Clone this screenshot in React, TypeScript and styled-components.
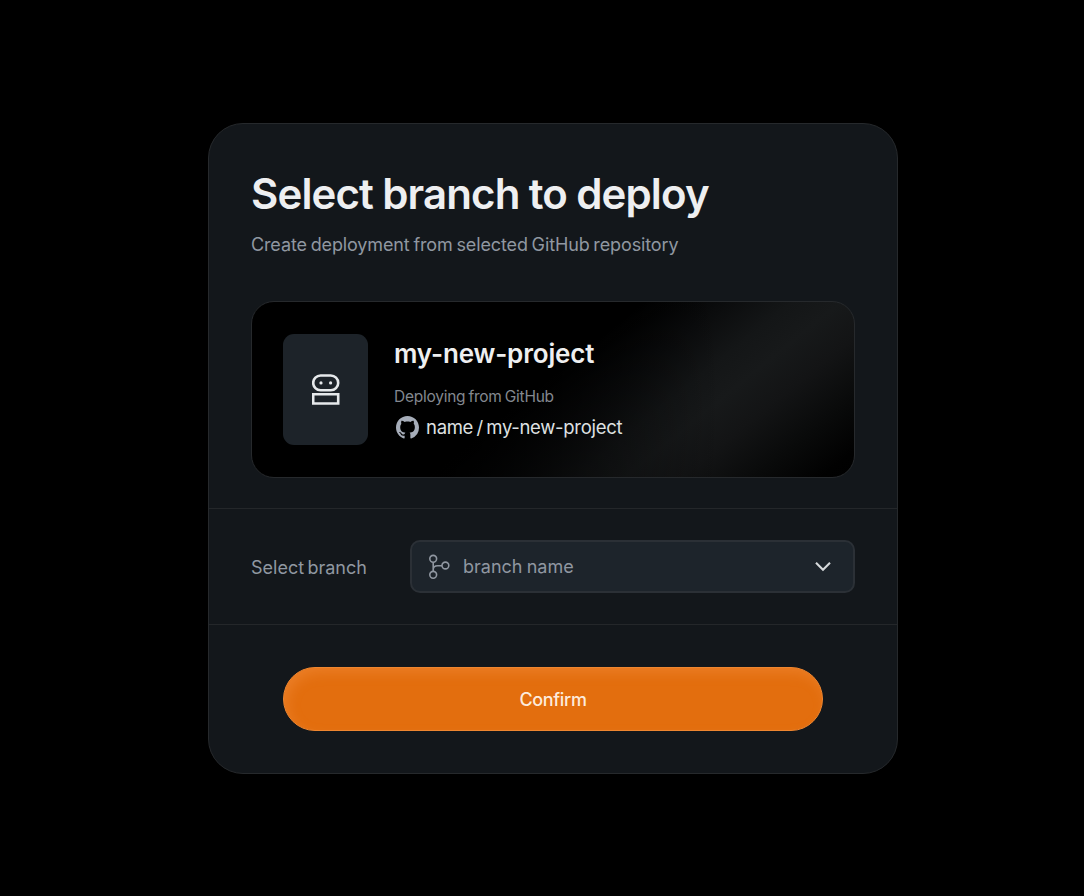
import styled, { createGlobalStyle } from "styled-components";

const GlobalStyle = createGlobalStyle`
  * { box-sizing: border-box; }
  body {
    margin: 0;
    background: #000;
    font-family: Inter, "Liberation Sans", sans-serif;
  }
`;

const Page = styled.main`
  height: 896px;
  padding: 123px 186px 0 208px;
  background: #000;
`;

const Dialog = styled.section`
  width: 690px;
  height: 651px;
  border: 1px solid #26292c;
  border-radius: 35px;
  background: #13171b;
`;

const Intro = styled.div`
  height: 384px;
  padding: 44px 42px 0;
`;

const Title = styled.h1`
  margin: 0;
  font-size: 42px;
  line-height: 52px;
  font-weight: 600;
  letter-spacing: -0.87px;
  word-spacing: -0.5px;
  color: #eeeff1;
  white-space: nowrap;
`;

const Subtitle = styled.p`
  margin: 13px 0 0;
  font-size: 18px;
  line-height: 24px;
  letter-spacing: -0.13px;
  word-spacing: -1.1px;
  color: #9097a1;
  white-space: nowrap;
`;

const ProjectCard = styled.article`
  display: flex;
  gap: 26px;
  height: 177px;
  margin-top: 44px;
  padding: 32px 31px;
  border: 1px solid #26292c;
  border-radius: 23px;
  background:
    linear-gradient(90deg, #000 25%, transparent 78%),
    linear-gradient(
      141deg,
      #000 0%,
      #000 48%,
      #0a0b0c 57%,
      #141617 66%,
      #17191a 72%,
      #131415 79%,
      #090a0a 88%,
      #010101 96%,
      #000 100%
    );
`;

const ProjectIcon = styled.div`
  display: grid;
  place-items: center;
  flex: none;
  width: 85px;
  height: 111px;
  border-radius: 11px;
  background: #1d2329;
`;

const ProjectInfo = styled.div`
  white-space: nowrap;
`;

const ProjectName = styled.h2`
  margin: 3px 0 0;
  font-size: 26px;
  line-height: 34px;
  font-weight: 600;
  letter-spacing: -0.15px;
  color: #eeeff0;
`;

const Source = styled.p`
  margin: 16px 0 0;
  font-size: 15.5px;
  line-height: 20px;
  letter-spacing: -0.25px;
  word-spacing: -1px;
  color: #83888f;
`;

const Repository = styled.div`
  display: flex;
  align-items: center;
  gap: 7px;
  height: 24px;
  margin-top: 8px;
  padding-left: 2px;
  font-size: 18.5px;
  letter-spacing: -0.3px;
  word-spacing: -1.5px;
  color: #dfe1e2;
`;

const BranchRow = styled.div`
  display: flex;
  align-items: center;
  justify-content: space-between;
  height: 117px;
  padding: 0 42px;
  border-top: 1px solid #24272a;
  border-bottom: 1px solid #24272a;
`;

const Label = styled.span`
  padding-top: 2px;
  font-size: 18px;
  word-spacing: -1.7px;
  color: #9097a1;
`;

const Select = styled.button`
  display: flex;
  align-items: center;
  width: 445px;
  height: 53px;
  padding: 0 21px 0 16px;
  border: 2px solid #2b3036;
  border-radius: 10px;
  background: #1d242b;
  color: #9097a1;
  font: inherit;
  font-size: 18px;
`;

const SelectText = styled.span`
  flex: 1;
  margin-left: 11px;
  text-align: left;
  word-spacing: -0.8px;
`;

const Actions = styled.div`
  padding: 42px 74px 0;
`;

const Confirm = styled.button`
  width: 540px;
  height: 64px;
  border: 1px solid #ee8630;
  border-radius: 32px;
  background: #e36e0e;
  box-shadow: inset 4px 6px 14px -2px rgba(255, 165, 100, 0.3);
  color: #fdebdc;
  font: inherit;
  font-size: 18px;
  font-weight: 500;
  letter-spacing: -0.35px;
`;

const RobotIcon = () => (
  <svg width="28" height="32" viewBox="0 0 28 32" fill="none" stroke="#e6e9eb" strokeWidth="2.6">
    <rect x="1.2" y="1.5" width="25" height="14.8" rx="7.4" />
    <path d="M1.2 20.3H26.2V29.5H1.2Z" />
    <circle cx="9" cy="8.9" r="1.6" fill="#e6e9eb" stroke="none" />
    <circle cx="18.6" cy="8.9" r="1.6" fill="#e6e9eb" stroke="none" />
  </svg>
);

const GitHubIcon = () => (
  <svg width="23" height="23" viewBox="0 0 16 16" fill="#a6adb9">
    <path d="M8 0C3.58 0 0 3.58 0 8c0 3.54 2.29 6.53 5.47 7.59.4.07.55-.17.55-.38 0-.19-.01-.82-.01-1.49-2.01.37-2.53-.49-2.69-.94-.09-.23-.48-.94-.82-1.13-.28-.15-.68-.52-.01-.53.63-.01 1.08.58 1.23.82.72 1.21 1.87.87 2.33.66.07-.52.28-.87.51-1.07-1.78-.2-3.64-.89-3.64-3.95 0-.87.31-1.59.82-2.15-.08-.2-.36-1.02.08-2.12 0 0 .67-.21 2.2.82.64-.18 1.32-.27 2-.27s1.36.09 2 .27c1.53-1.04 2.2-.82 2.2-.82.44 1.1.16 1.92.08 2.12.51.56.82 1.27.82 2.15 0 3.07-1.87 3.75-3.65 3.95.29.25.54.73.54 1.48 0 1.07-.01 1.93-.01 2.2 0 .21.15.46.55.38A8.01 8.01 0 0 0 16 8c0-4.42-3.58-8-8-8Z" />
  </svg>
);

const BranchIcon = () => (
  <svg width="24" height="28" viewBox="0 0 24 28" fill="none" stroke="#9097a1" strokeWidth="1.6">
    <circle cx="5.2" cy="5.8" r="3.4" />
    <circle cx="5.2" cy="21.8" r="3.4" />
    <circle cx="17.4" cy="12.5" r="3.4" />
    <path d="M5.2 9.2V18.4M5.2 16.4C5.2 14 7.2 12.7 9.6 12.7H14" />
  </svg>
);

const ChevronIcon = () => (
  <svg width="18" height="12" viewBox="0 0 18 12" fill="none" stroke="#d6d9db" strokeWidth="2.1">
    <path d="M2 1.8L9 8.8L16 1.8" />
  </svg>
);

export default function App() {
  return (
    <>
      <GlobalStyle />
      <Page>
        <Dialog>
          <Intro>
            <Title>Select branch to deploy</Title>
            <Subtitle>Create deployment from selected GitHub repository</Subtitle>
            <ProjectCard>
              <ProjectIcon>
                <RobotIcon />
              </ProjectIcon>
              <ProjectInfo>
                <ProjectName>my-new-project</ProjectName>
                <Source>Deploying from GitHub</Source>
                <Repository>
                  <GitHubIcon />
                  <span>name / my-new-project</span>
                </Repository>
              </ProjectInfo>
            </ProjectCard>
          </Intro>
          <BranchRow>
            <Label>Select branch</Label>
            <Select>
              <BranchIcon />
              <SelectText>branch name</SelectText>
              <ChevronIcon />
            </Select>
          </BranchRow>
          <Actions>
            <Confirm>Confirm</Confirm>
          </Actions>
        </Dialog>
      </Page>
    </>
  );
}
